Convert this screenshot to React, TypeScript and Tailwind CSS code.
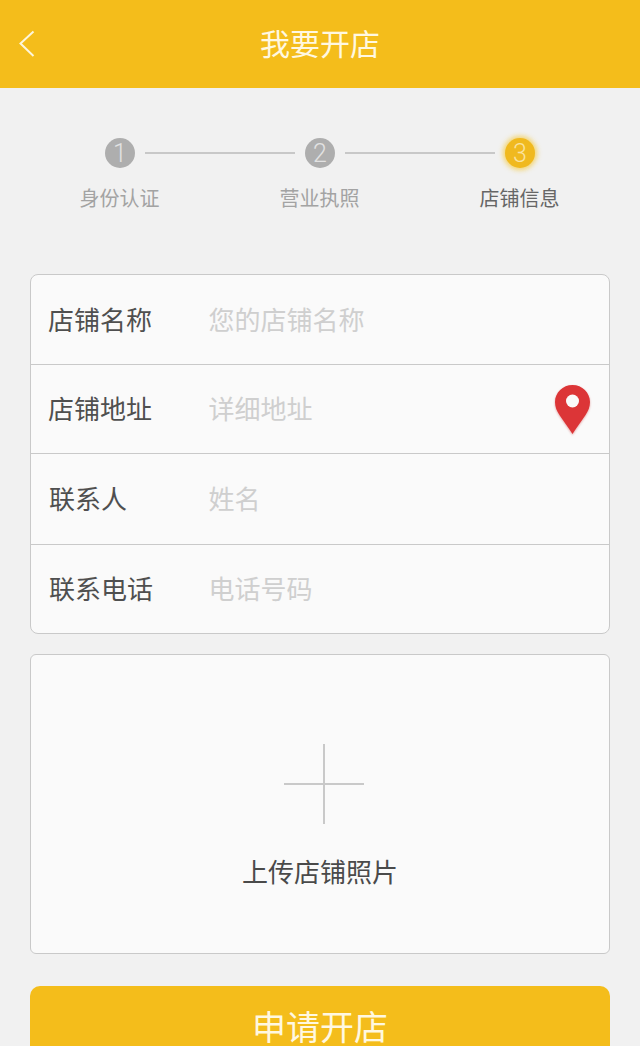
const font = { fontFamily: '"Noto Sans CJK SC", "Noto Sans", sans-serif' };

const rows = [
  { label: '店铺名称', hint: '您的店铺名称', height: 'h-[89px]', inset: 'pl-[17px]', labelWidth: 'w-[160.500px]' },
  { label: '店铺地址', hint: '详细地址', pin: true, height: 'h-[89px]', inset: 'pl-[17px]', labelWidth: 'w-[160.500px]' },
  { label: '联系人', hint: '姓名', height: 'h-[91px]', inset: 'pl-[18px]', labelWidth: 'w-[159.500px]' },
  { label: '联系电话', hint: '电话号码', height: 'h-[89px]', inset: 'pl-[18px]', labelWidth: 'w-[159.500px]' },
];

function Pin() {
  return (
    <svg width="37" height="52" viewBox="0 0 37 52" className="mt-[4px] drop-shadow-[0_1px_1px_rgba(200,40,40,0.4)]">
      <path
        d="M18.500 1C8.800 1 1 8.600 1 18c0 5 1.800 9 4.600 13.200C9.500 37 14.500 43.500 18.500 50c4-6.500 9-13 12.900-18.800C34.200 27 36 23 36 18 36 8.600 28.200 1 18.500 1z"
        fill="#dc3537"
      />
      <circle cx="18.500" cy="17" r="6.500" fill="#fafafa" />
    </svg>
  );
}

function StepDot({ n, active }: { n: number; active?: boolean }) {
  return (
    <span
      className={`w-[30px] h-[30px] rounded-full font-['Roboto'] text-[25px] font-light flex items-center justify-center leading-none ${
        active
          ? 'bg-[#f0b91f] text-[#fae3a0] shadow-[0_0_5px_2px_rgba(245,200,50,0.7)]'
          : 'bg-[#aeaeae] text-[#e2e2e2]'
      }`}
    >
      {n}
    </span>
  );
}

export default function App() {
  return (
    <div style={font} className="w-[640px] h-[1046px] overflow-hidden bg-[#f1f1f1]">
      {/* header */}
      <header className="relative h-[88px] bg-[#f4bd1b] flex items-center justify-center">
        <svg width="20" height="30" viewBox="0 0 20 30" className="absolute left-[17px] top-[29px]">
          <path d="M16.500 2.500 3.500 14.500l13 12.500" fill="none" stroke="#fdf6dc" strokeWidth="2" />
        </svg>
        <h1 className="text-[30px] text-[#fff8e1] font-normal leading-none -mt-[4px]">我要开店</h1>
      </header>

      {/* steps */}
      <div className="pt-[50px] h-[186px]">
        <div className="flex items-center px-[105px] h-[30px]">
          <StepDot n={1} />
          <span className="flex-1 h-[2px] mx-[10px] bg-[#c8c8c8]" />
          <StepDot n={2} />
          <span className="flex-1 h-[2px] mx-[10px] bg-[#c8c8c8]" />
          <StepDot n={3} active />
        </div>
        <div className="grid grid-cols-3 pl-[19.500px] pr-[20.500px] mt-[15px] text-[20px] leading-[30px] text-center">
          <span className="text-[#a3a3a3]">身份认证</span>
          <span className="text-[#a3a3a3]">营业执照</span>
          <span className="text-[#666666]">店铺信息</span>
        </div>
      </div>

      <main className="px-[30px]">
        {/* form */}
        <div className="h-[360px] rounded-[8px] border border-[#c9c9c9] bg-[#fafafa]">
          {rows.map((row, i) => (
            <div
              key={row.label}
              className={`${row.height} ${row.inset} flex items-center pr-[18px] pb-[3px] ${i > 0 ? 'border-t border-[#c9c9c9]' : ''}`}
            >
              <span className={`${row.labelWidth} text-[26px] text-[#4f4f4f]`}>{row.label}</span>
              <span className="flex-1 text-[26px] text-[#cfcfcf]">{row.hint}</span>
              {row.pin && <Pin />}
            </div>
          ))}
        </div>

        {/* upload */}
        <div className="mt-[20px] h-[300px] rounded-[6px] border border-[#c9c9c9] bg-[#fafafa] flex flex-col items-center pt-[89px]">
          <svg width="80" height="80" viewBox="0 0 80 80" className="ml-[8px]">
            <path d="M40 0v80M0 40h80" stroke="#c9c9c9" strokeWidth="2" />
          </svg>
          <p className="mt-[27px] text-[26px] leading-[40px] text-[#4a4a4a]">上传店铺照片</p>
        </div>

        {/* submit */}
        <button className="mt-[32px] w-full h-[60px] rounded-t-[10px] bg-[#f4bd1b] text-[34px] text-[#fff8e1] flex justify-center pt-[20px] leading-[40px]">
          申请开店
        </button>
      </main>
    </div>
  );
}
